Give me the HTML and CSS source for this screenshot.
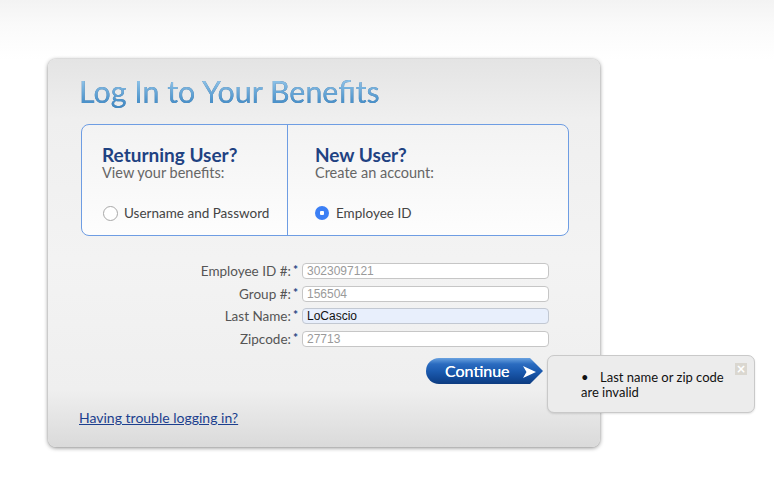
FILE: index.html
```html
<!DOCTYPE html>
<html>
<head>
<meta charset="utf-8">
<link rel="stylesheet" href="styles.css">
</head>
<body>
<div class="card">
  <h1 class="title">Log In to Your Benefits</h1>
  <div class="choice">
    <div class="col col-left">
      <div class="col-head">Returning User?</div>
      <div class="col-sub">View your benefits:</div>
      <label class="radio-row"><span class="radio"></span><span>Username and Password</span></label>
    </div>
    <div class="col col-right">
      <div class="col-head">New User?</div>
      <div class="col-sub">Create an account:</div>
      <label class="radio-row"><span class="radio checked"></span><span>Employee ID</span></label>
    </div>
  </div>
  <div class="form">
    <div class="lbl">Employee ID #:<span class="req">*</span></div>
    <div class="inp">3023097121</div>
    <div class="lbl">Group #:<span class="req">*</span></div>
    <div class="inp">156504</div>
    <div class="lbl">Last Name:<span class="req">*</span></div>
    <div class="inp filled">LoCascio</div>
    <div class="lbl">Zipcode:<span class="req">*</span></div>
    <div class="inp">27713</div>
  </div>
  <div class="actions">
    <div class="btn"><span>Continue</span><svg class="arrow" width="13" height="12" viewBox="0 0 13 12"><polygon points="0,0 13,6 0,12 3.5,6" fill="#fff"/></svg></div>
    <div class="tip">
      <div class="tip-close">×</div>
      <ul class="tip-list"><li>Last name or zip code are invalid</li></ul>
    </div>
  </div>
  <a class="help" href="#">Having trouble logging in?</a>
</div>
</body>
</html>
```
FILE: styles.css
```css
html, body {
  margin: 0;
  padding: 0;
}
body {
  width: 774px;
  height: 479px;
  overflow: hidden;
  background: linear-gradient(#f3f3f3 0px, #fafafa 25px, #fdfdfd 45px, #ffffff 60px);
  font-family: Lato, "Liberation Sans", sans-serif;
  padding-top: 59px;
  box-sizing: border-box;
}
.card {
  margin-left: 48px;
  width: 552px;
  height: 388px;
  box-sizing: border-box;
  padding: 14px 0 0 31px;
  border-radius: 8px;
  background: linear-gradient(#e4e4e4 0px, #efefef 60px, #f3f3f3 200px, #efefef 330px, #dadada 388px);
  box-shadow: 0 1px 4px rgba(0,0,0,0.45), 0 0 1px rgba(0,0,0,0.25);
  display: flex;
  flex-direction: column;
  align-items: flex-start;
}
.title {
  margin: 0;
  font-size: 30.4px;
  line-height: 36px;
  font-weight: 400;
  color: transparent;
  background: linear-gradient(#8fc3e8 20%, #4f95cc 75%, #3f86c0);
  -webkit-background-clip: text;
  background-clip: text;
  filter: drop-shadow(0 0 0.6px rgba(25,80,140,0.8));
}
.choice {
  margin: 15px 0 0 2px;
  width: 488px;
  height: 112px;
  box-sizing: border-box;
  border: 1px solid #6e9de3;
  border-radius: 8px;
  background: linear-gradient(#f3f3f3, #fdfdfd);
  display: flex;
}
.col {
  box-sizing: border-box;
  padding-top: 20px;
}
.col-left {
  width: 206px;
  border-right: 1px solid #6e9de3;
  padding-left: 20px;
}
.col-right {
  flex: 1;
  padding-left: 27px;
}
.col-head {
  font-size: 19px;
  line-height: 20px;
  font-weight: 700;
  color: #1f4282;
}
.col-sub {
  font-size: 14.5px;
  line-height: 16px;
  color: #666;
}
.radio-row {
  margin-top: 24px;
  display: flex;
  align-items: center;
  gap: 7px;
  font-size: 13.5px;
  line-height: 16px;
  color: #444;
}
.col-left .radio-row { margin-left: 1px; gap: 6px; }
.radio {
  width: 13px;
  height: 13px;
  border: 1px solid #a8a8a8;
  border-radius: 50%;
  background: #fff;
  display: inline-block;
}
.radio.checked {
  width: 14px;
  height: 14px;
  border: none;
  background: radial-gradient(circle, #fff 0 2px, #3b7ff5 2.5px);
}
.form {
  margin-top: 27px;
  display: grid;
  grid-template-columns: 219px 247px;
  grid-auto-rows: 16px;
  column-gap: 4px;
  row-gap: 6.7px;
}
.lbl {
  height: 16px;
  display: flex;
  justify-content: flex-end;
  align-items: center;
  font-size: 13.5px;
  line-height: 16px;
  color: #555;
}
.req {
  color: #1f4282;
  font-weight: 700;
  font-size: 12px;
  line-height: 12px;
  margin-left: 2px;
  align-self: flex-start;
  margin-top: 1px;
}
.inp {
  height: 16px;
  box-sizing: border-box;
  border: 1px solid #c6c6c6;
  border-radius: 4px;
  background: #fff;
  font-family: "Liberation Sans", Arial, sans-serif;
  font-size: 12px;
  line-height: 14px;
  color: #9a9a9a;
  padding-left: 4px;
}
.inp.filled {
  background: #e8effc;
  border-color: #c2c8d2;
  color: #111;
}
.actions {
  position: relative;
  margin-top: 11px;
  width: 470px;
  box-sizing: border-box;
  padding-right: 6px;
  display: flex;
  justify-content: flex-end;
}
.btn {
  width: 117px;
  height: 26px;
  box-sizing: border-box;
  padding-left: 19px;
  display: flex;
  align-items: center;
  gap: 13px;
  border-radius: 13px 0 0 13px;
  clip-path: polygon(0 0, calc(100% - 13px) 0, 100% 50%, calc(100% - 13px) 100%, 0 100%);
  background: linear-gradient(#6aa2e0 0px, #2b6cc0 6px, #1c5bb0 13px, #124a98 20px, #0e3c80 26px);
  color: #fff;
  font-size: 16px;
  font-weight: 400;
  line-height: 18px;
  text-shadow: 0 0 0.4px #fff;
}
.arrow { margin-top: 1px; }
.tip {
  position: absolute;
  left: 468px;
  top: -3px;
  width: 208px;
  height: 58px;
  box-sizing: border-box;
  border: 1px solid #c9c9c9;
  border-radius: 7px;
  background: #ececec;
  box-shadow: 0 1px 2px rgba(0,0,0,0.12);
  padding: 14px 22px 0 33px;
  font-size: 13px;
  line-height: 15px;
  color: #111;
}
.tip-close {
  position: absolute;
  right: 7px;
  top: 7px;
  width: 12px;
  height: 12px;
  background: #dad7d0;
  color: #fff;
  font-family: "DejaVu Sans", sans-serif;
  font-size: 12px;
  line-height: 12px;
  text-align: center;
  font-weight: 700;
}
.tip-list {
  list-style: none;
  margin: 0;
  padding: 0;
}
.tip-list li::before {
  content: "•";
  display: inline-block;
  width: 19px;
}
.help {
  margin-top: 25px;
  font-size: 14px;
  line-height: 17px;
  color: #1c3f8e;
  text-decoration: underline;
}
```
